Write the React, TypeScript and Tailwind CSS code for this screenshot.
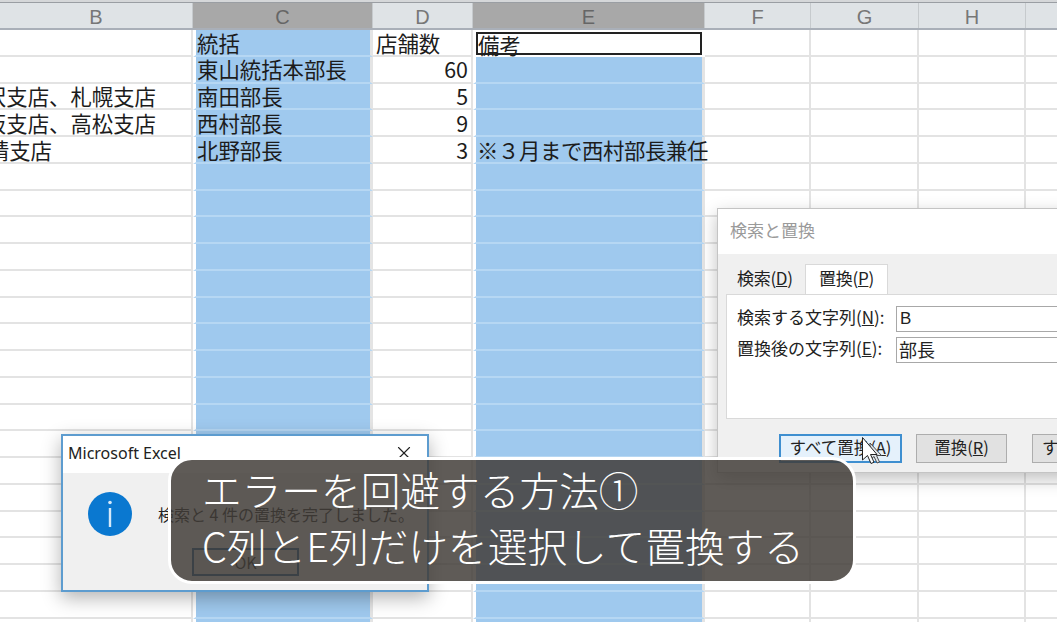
import { X } from 'lucide-react';

const columns = [
  { name: 'B', width: 'w-[193px]', selected: false },
  { name: 'C', width: 'w-[180px]', selected: true },
  { name: 'D', width: 'w-[100px]', selected: false },
  { name: 'E', width: 'w-[232px]', selected: true },
  { name: 'F', width: 'w-[106px]', selected: false },
  { name: 'G', width: 'w-[108px]', selected: false },
  { name: 'H', width: 'w-[107px]', selected: false },
  { name: '', width: 'w-[40px]', selected: false },
];

// 表のデータ
const rows: Record<string, string>[] = [
  { C: '統括', D: '店舗数', E: '備考' },
  { C: '東山統括本部長', D: '60' },
  { B: '軽井沢支店、札幌支店', C: '南田部長', D: '5' },
  { B: '大阪支店、高松支店', C: '西村部長', D: '9' },
  { B: '精支店', C: '北野部長', D: '3', E: '※３月まで西村部長兼任' },
  ...Array.from({ length: 18 }, () => ({})),
];

function Sheet() {
  return (
    <div className="flex flex-col text-[21.4px] text-[#1c1c1c]">
      <div className="h-[3px] bg-[#d5d7d9] border-b border-[#9a9ea3]" />
      <div className="flex h-[27px] border-b-2 border-[#a9afb8]">
        {columns.map((col) => (
          <div
            key={col.name}
            className={`${col.width} shrink-0 flex items-center justify-center border-r border-[#c6cacd] pt-[2px] font-['Liberation_Sans',sans-serif] text-[20px] font-light ${
              col.selected ? 'bg-[#a8a8a8] text-[#666]' : 'bg-[#dfe3e6] text-[#777]'
            }`}
          >
            {col.name}
          </div>
        ))}
      </div>
      {rows.map((row, i) => (
        <div key={i} className="flex h-[26.75px]">
          {columns.map((col) => {
            const text = row[col.name];
            const isActive = i === 0 && col.name === 'E';
            if (isActive) {
              return (
                <div key={col.name} className={`${col.width} shrink-0 pl-[3px] pr-[3px] py-[2px] bg-white`}>
                  <div className="h-full border-2 border-[#222] flex items-center leading-none whitespace-nowrap pt-[2px]">{text}</div>
                </div>
              );
            }
            if (col.selected) {
              return (
                <div
                  key={col.name}
                  className={`${col.width} shrink-0 flex items-center border-l-[3px] border-r-[3px] border-b-2 border-l-white border-r-[#e4e4e4] border-b-[#b6d7f3] bg-[#9fc9ee] pl-px whitespace-nowrap leading-none ${
                    col.name === 'E' ? 'tracking-[-0.4px]' : ''
                  }`}
                >
                  {text}
                </div>
              );
            }
            let align = 'pl-[3px]';
            if (col.name === 'B') align = i === 4 ? 'justify-end overflow-hidden pr-[139px]' : 'justify-end overflow-hidden pr-[35px]';
            if (col.name === 'D' && i > 0) align = 'justify-end pr-[3px]';
            return (
              <div
                key={col.name}
                className={`${col.width} shrink-0 flex items-center border-r-2 border-b-2 border-[#e3e3e3] whitespace-nowrap leading-none ${align}`}
              >
                {text}
              </div>
            );
          })}
        </div>
      ))}
    </div>
  );
}

function SearchDialog() {
  return (
    <div className="absolute left-[717px] top-[208px] w-[400px] h-[265px] flex flex-col border border-[#c4c4c4] bg-[#f0f0f0] shadow-[0_6px_16px_rgba(0,0,0,0.25)] text-[17px] text-[#222]">
      <div className="h-[45px] shrink-0 bg-white flex items-center pl-[12px] pb-[4px] text-[#9a9a9a]">検索と置換</div>
      <div className="flex items-end h-[40px] shrink-0 pl-[8px]">
        <div className="w-[79px] h-[29px] flex items-center pl-[11px] pb-[4px] tracking-[-0.3px]">
          検索(<span className="underline">D</span>)
        </div>
        <div className="w-[83px] h-[30px] bg-white border-x border-t border-[#d9d9d9] flex items-center justify-center pb-[4px] tracking-[-0.3px]">
          置換(<span className="underline">P</span>)
        </div>
      </div>
      <div className="ml-[8px] h-[125px] shrink-0 bg-white border border-[#d9d9d9] pl-[10px] pt-[11px] flex flex-col gap-[5px]">
        <div className="flex items-center h-[26px]">
          <div className="w-[159px] shrink-0 whitespace-nowrap pb-[4px]">
            検索する文字列(<span className="underline">N</span>):
          </div>
          <div className="flex-1 h-[26px] border border-[#a8a8a8] flex items-center pl-[3px] font-['Liberation_Sans',sans-serif]">B</div>
        </div>
        <div className="flex items-center h-[26px]">
          <div className="w-[159px] shrink-0 whitespace-nowrap pb-[4px]">
            置換後の文字列(<span className="underline">E</span>):
          </div>
          <div className="flex-1 h-[26px] border border-[#a8a8a8] flex items-center pl-[2px] pb-[2px] text-[18px]">部長</div>
        </div>
      </div>
      <div className="flex pl-[61px] pt-[15px] gap-[14px] text-[16.5px]">
        <div className="w-[123px] shrink-0 h-[29px] border-2 border-[#3f8fd0] bg-[#e5f1fb] flex items-center justify-center whitespace-nowrap pb-[3px]">
          すべて置換(<span className="underline">A</span>)
        </div>
        <div className="w-[91px] shrink-0 h-[29px] border border-[#adadad] bg-[#e1e1e1] flex items-center justify-center whitespace-nowrap pb-[3px]">
          置換(<span className="underline">R</span>)
        </div>
        <div className="w-[120px] shrink-0 ml-[11px] h-[29px] border border-[#adadad] bg-[#e1e1e1] flex items-center pl-[9px] whitespace-nowrap pb-[3px]">
          すべて検索(<span className="underline">I</span>)
        </div>
      </div>
    </div>
  );
}

function ExcelDialog() {
  return (
    <div className="absolute left-[61px] top-[434px] w-[368px] h-[158px] flex flex-col border-2 border-[#5d9ccf] bg-[#f0f0f0] shadow-[0_6px_18px_rgba(0,0,0,0.3)] text-[#222]">
      <div className="h-[37px] shrink-0 bg-white flex items-center justify-between pl-[5px] pr-[12px] pb-[3px] font-['Noto_Sans',sans-serif] text-[16px]">
        <span>Microsoft Excel</span>
        <X size={22} strokeWidth={1.25} />
      </div>
      <div className="flex pl-[25px] pt-[19px] gap-[26px]">
        <svg width="44" height="44" viewBox="0 0 44 44" className="shrink-0">
          <circle cx="22" cy="22" r="22" fill="#0a78d0" />
          <circle cx="22" cy="10.5" r="1.8" fill="#d5e9f9" />
          <rect x="20.8" y="16" width="2.4" height="19" fill="#d5e9f9" />
        </svg>
        <div className="flex flex-col">
          <div className="text-[16px] whitespace-nowrap pt-[10px]">検索と 4 件の置換を完了しました。</div>
          <div className="mt-[22px] ml-[34px] w-[107px] h-[28px] border-2 border-[#1f5f96] bg-[#e1e1e1] flex items-center justify-center text-[16px]">OK</div>
        </div>
      </div>
    </div>
  );
}

function Cursor() {
  return (
    <svg width="22" height="30" viewBox="0 0 22 30" className="absolute left-[861px] top-[436px]">
      <path d="M9 7 L9 24 L13 20.5 L16 27 L18.5 26 L15.5 19.5 L20.5 19.5 Z" fill="#dfe4ea" stroke="#4a4a4a" strokeWidth="1" />
      <path d="M1.5 1.5 L1.5 24 L6.5 19.5 L10 27.5 L13 26.2 L9.5 18.5 L16 18.5 Z" fill="#fff" stroke="#222" strokeWidth="1" strokeLinejoin="round" />
    </svg>
  );
}

export default function App() {
  return (
    <div className="relative w-[1057px] h-[622px] overflow-hidden bg-white font-['Noto_Sans_CJK_JP',sans-serif]">
      <Sheet />
      <SearchDialog />
      <ExcelDialog />
      <Cursor />
      {/* テロップ */}
      <div className="absolute left-[168px] top-[457px] w-[688px] h-[127px] box-border rounded-[24px] border-[3px] border-white bg-[rgba(64,60,55,0.84)] pl-[31px] pt-[1px] text-white text-[39.7px] leading-[56px] font-light whitespace-nowrap">
        <div>エラーを回避する方法①</div>
        <div>C列とE列だけを選択して置換する</div>
      </div>
    </div>
  );
}
